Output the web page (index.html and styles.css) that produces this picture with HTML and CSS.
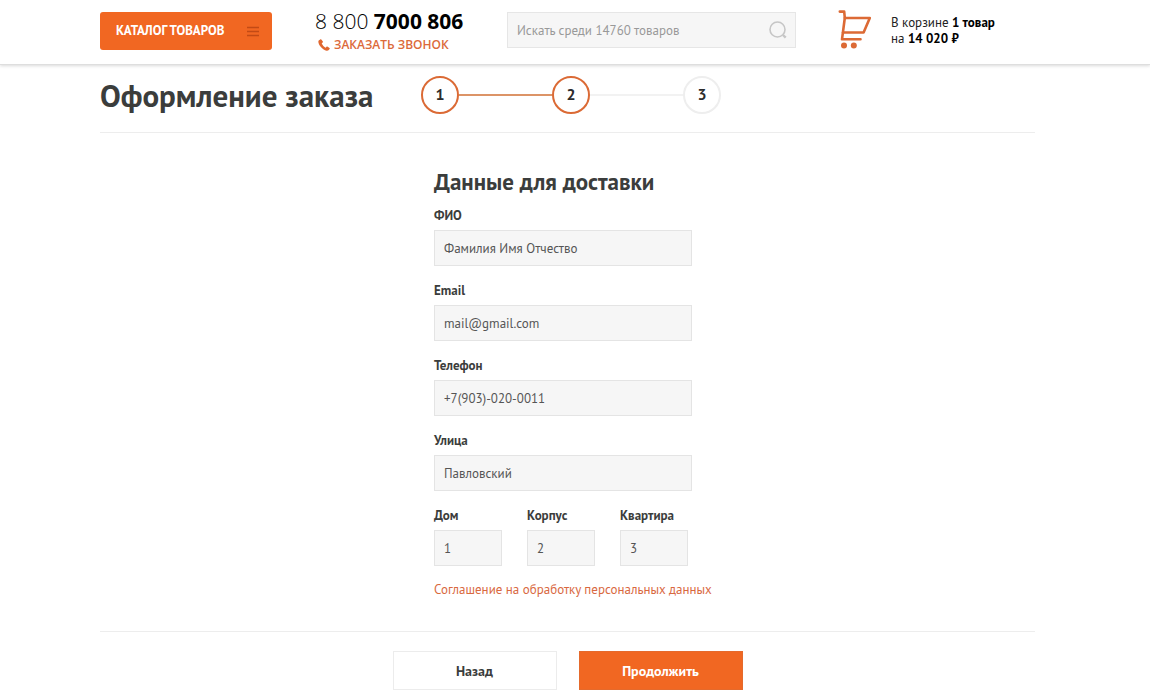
FILE: index.html
```html
<!DOCTYPE html>
<html lang="ru">
<head>
    <meta charset="UTF-8">
    <meta name="viewport" content="width=device-width, initial-scale=1.0">
    <title>Оформление заказа</title>
    <link rel="stylesheet" href="styles.css">
</head>
<body>
    <header class="header">
        <div class="container header-inner">
            <button type="button" class="catalog-btn">
                <span>КАТАЛОГ ТОВАРОВ</span>
                <svg width="12" height="11" viewBox="0 0 12 11" aria-hidden="true">
                    <path d="M0 1.5h12M0 5.5h12M0 9.5h12" stroke="#c24a15" stroke-width="1.3"/>
                </svg>
            </button>

            <div class="contacts">
                <a href="tel:88007000806" class="phone">8 800 <b>7000 806</b></a>
                <a href="#" class="callback">
                    <svg width="12" height="12" viewBox="0 0 12 12" aria-hidden="true">
                        <path d="M2.2.4.7 1.6C0 2.4.3 4.6 2 7c2 2.800 4.600 4.400 6.600 4.700 1 .1 1.800-.3 2.400-1l.7-1c.2-.3.1-.6-.2-.8L9.300 7.600c-.3-.2-.6-.1-.8.1l-.8 1C6.300 8.200 4.200 5.800 3.700 4.200l1-.8c.3-.2.3-.5.2-.8L3.300.5C3 .2 2.500.1 2.200.4z" fill="#e0672f"/>
                    </svg>
                    ЗАКАЗАТЬ ЗВОНОК
                </a>
            </div>

            <form class="search">
                <input type="search" class="search-input" placeholder="Искать среди 14760 товаров" aria-label="Поиск товаров">
                <button type="submit" class="search-btn" aria-label="Найти">
                    <svg width="20" height="20" viewBox="0 0 20 20" fill="none" stroke="#c6c6c6" stroke-width="1.6" aria-hidden="true">
                        <circle cx="9.500" cy="9.500" r="7.500"/>
                        <path d="M15 15l2.700 2.700" stroke-width="2.400"/>
                    </svg>
                </button>
            </form>

            <a href="#" class="cart">
                <svg width="34" height="40" viewBox="0 0 34 40" fill="none" stroke="#dc6a35" stroke-width="2.600" stroke-linecap="round" stroke-linejoin="round" aria-hidden="true">
                    <path d="M1.800 1.600h4.400l.6 6.400h25l-6.200 14.500H5"/>
                    <path d="M6.800 8 4 29.300h18.500"/>
                    <circle cx="6" cy="35.500" r="3" fill="#dc6a35" stroke="none"/>
                    <circle cx="15.800" cy="35.500" r="3" fill="#dc6a35" stroke="none"/>
                </svg>
                <span class="cart-text">В корзине <b>1 товар</b><br>на <b>14 020 ₽</b></span>
            </a>
        </div>
    </header>

    <main class="container">
        <div class="title-row">
            <h1>Оформление заказа</h1>
            <ol class="steps">
                <li class="step active">1</li>
                <li class="step active">2</li>
                <li class="step">3</li>
            </ol>
        </div>

        <form class="order">
            <div class="delivery">
                <h2>Данные для доставки</h2>

                <div class="field">
                    <label for="name">ФИО</label>
                    <input type="text" id="name" value="Фамилия Имя Отчество">
                </div>
                <div class="field">
                    <label for="email">Email</label>
                    <input type="email" id="email" value="mail@gmail.com">
                </div>
                <div class="field">
                    <label for="phone">Телефон</label>
                    <input type="tel" id="phone" value="+7(903)-020-0011">
                </div>
                <div class="field">
                    <label for="street">Улица</label>
                    <input type="text" id="street" value="Павловский">
                </div>

                <div class="address">
                    <div class="field">
                        <label for="house">Дом</label>
                        <input type="text" id="house" value="1">
                    </div>
                    <div class="field">
                        <label for="building">Корпус</label>
                        <input type="text" id="building" value="2">
                    </div>
                    <div class="field">
                        <label for="flat">Квартира</label>
                        <input type="text" id="flat" value="3">
                    </div>
                </div>

                <a href="#" class="agreement">Соглашение на обработку персональных данных</a>
            </div>

            <div class="actions">
                <button type="button" class="btn">Назад</button>
                <button type="submit" class="btn btn-primary">Продолжить</button>
            </div>
        </form>
    </main>
</body>
</html>
```

FILE: styles.css
```css
* {
    margin: 0;
    padding: 0;
    box-sizing: border-box;
}

body {
    font-family: 'PT Sans', 'Noto Sans', sans-serif;
    font-size: 13px;
    line-height: 16px;
    color: #3b3d3c;
    background: #fff;
}

a {
    text-decoration: none;
}

button,
input {
    font: inherit;
    color: inherit;
}

button {
    cursor: pointer;
}

.container {
    padding: 0 115px 0 100px;
}

/* Шапка */
.header {
    border-bottom: 1px solid #dedede;
    box-shadow: 0 1px 3px rgba(0, 0, 0, 0.15);
}

.header-inner {
    display: flex;
    align-items: center;
    height: 64px;
}

.catalog-btn {
    display: flex;
    align-items: center;
    justify-content: space-between;
    width: 172px;
    height: 38px;
    padding: 0 13px 0 16px;
    margin: 0 43px 2px 0;
    border: none;
    border-radius: 3px;
    background: #f16722;
    color: #fff;
    font-weight: 700;
    white-space: nowrap;
}

.contacts {
    display: flex;
    flex-direction: column;
    width: 150px;
    margin-right: 42px;
    white-space: nowrap;
}

.phone {
    font-family: 'Open Sans', sans-serif;
    font-size: 21px;
    line-height: 26px;
    font-weight: 300;
    color: #000;
}

.phone b {
    font-weight: 700;
}

.callback {
    display: flex;
    align-items: center;
    gap: 4px;
    padding-left: 3px;
    font-family: 'Open Sans', sans-serif;
    font-size: 12px;
    line-height: 22px;
    font-weight: 600;
    color: #dc6a3a;
}

.search {
    display: flex;
    flex: 1;
    height: 36px;
    margin: 0 42px 4px 0;
    border: 1px solid #e6e6e6;
    background: #f6f6f6;
}

.search-input {
    flex: 1;
    min-width: 0;
    padding: 2px 9px 0;
    border: none;
    background: none;
    appearance: none;
}

.search-input::placeholder {
    color: #999;
}

.search-btn {
    display: flex;
    align-items: center;
    padding: 0 7px;
    border: none;
    background: none;
}

.cart {
    display: flex;
    align-items: center;
    gap: 19px;
    width: 197px;
    margin-bottom: 4px;
    color: #222;
    white-space: nowrap;
}

.cart-text {
    padding-top: 2px;
}

.cart b {
    color: #000;
}

/* Заголовок и шаги */
.title-row {
    display: flex;
    align-items: center;
    height: 68px;
    padding-bottom: 8px;
    border-bottom: 1px solid #ededed;
}

h1 {
    width: 321px;
    padding-top: 2px;
    font-size: 31px;
    line-height: 40px;
    font-weight: 600;
    white-space: nowrap;
}

.steps {
    display: flex;
    list-style: none;
}

.step {
    display: flex;
    align-items: center;
    justify-content: center;
    width: 38px;
    height: 38px;
    padding-bottom: 2px;
    border: 2px solid #eee;
    border-radius: 50%;
    font-size: 16px;
    font-weight: 600;
    color: #2c2c2c;
}

.step.active {
    border-color: #db6a35;
}

.step + .step {
    position: relative;
    margin-left: 93px;
}

.step + .step::before {
    content: '';
    position: absolute;
    top: 16px;
    right: 36px;
    width: 93px;
    border-top: 2px solid #f2f2f2;
}

.step + .step.active::before {
    border-color: #dc9467;
}

/* Форма */
.delivery {
    width: 267px;
    margin: 0 auto;
    padding: 33px 0;
}

h2 {
    margin-bottom: 10px;
    font-size: 23px;
    line-height: 32px;
    font-weight: 600;
    white-space: nowrap;
}

.field {
    width: 258px;
    margin-bottom: 16px;
}

.field label {
    display: block;
    margin-bottom: 6px;
    font-weight: 600;
}

.field input {
    display: block;
    width: 100%;
    height: 36px;
    padding: 0 9px;
    border: 1px solid #e4e4e4;
    background: #f6f6f6;
    color: #555;
}

.field + .field,
.field + .address {
    padding-top: 1px;
}

.address {
    display: flex;
    gap: 25px;
}

.address .field {
    width: 68px;
    padding-top: 0;
}

.agreement {
    color: #d9693f;
    white-space: nowrap;
}

.actions {
    display: flex;
    justify-content: center;
    gap: 22px;
    padding-top: 19px;
    border-top: 1px solid #ededed;
}

.btn {
    width: 164px;
    height: 39px;
    border: 1px solid #ececec;
    background: #fff;
    font-size: 14px;
    font-weight: 700;
}

.btn-primary {
    border-color: #e56a2c;
    background: #f16722;
    color: #fff;
}
```
